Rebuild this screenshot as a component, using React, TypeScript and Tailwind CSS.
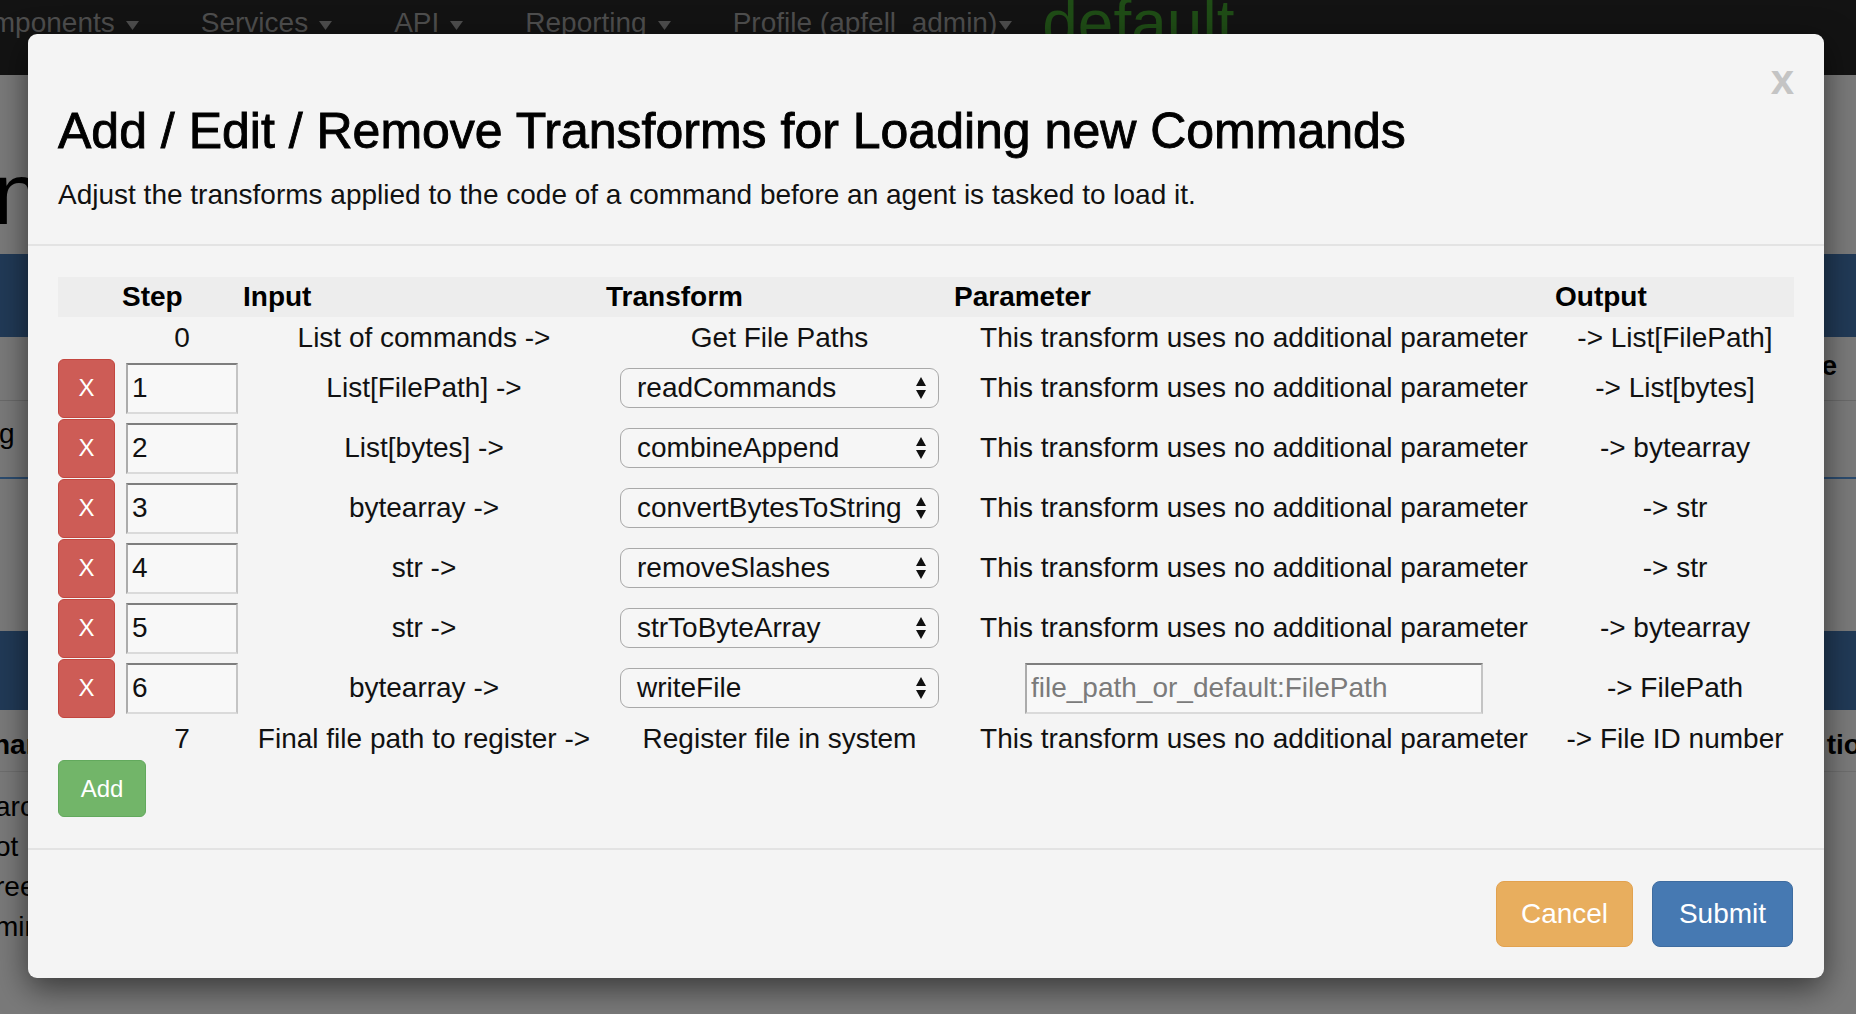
import React from "react";

type Row = {
  step: string;
  input: string;
  transform: string;
  output: string;
  param?: string;
};

const rows: Row[] = [
  { step: "1", input: "List[FilePath] ->", transform: "readCommands", output: "-> List[bytes]" },
  { step: "2", input: "List[bytes] ->", transform: "combineAppend", output: "-> bytearray" },
  { step: "3", input: "bytearray ->", transform: "convertBytesToString", output: "-> str" },
  { step: "4", input: "str ->", transform: "removeSlashes", output: "-> str" },
  { step: "5", input: "str ->", transform: "strToByteArray", output: "-> bytearray" },
  {
    step: "6",
    input: "bytearray ->",
    transform: "writeFile",
    output: "-> FilePath",
    param: "file_path_or_default:FilePath",
  },
];

const NO_PARAM = "This transform uses no additional parameter";

function Caret() {
  return (
    <svg width="13" height="9" viewBox="0 0 13 9" className="ml-[11px] mt-[4px] shrink-0">
      <path d="M0 0 L13 0 L6.5 9 Z" fill="#4e4e4e" />
    </svg>
  );
}

function NavItem({ label }: { label: string }) {
  return (
    <div className="flex items-center whitespace-nowrap">
      <span>{label}</span>
      <Caret />
    </div>
  );
}

function SelectBox({ value }: { value: string }) {
  return (
    <div className="relative flex h-[40px] w-[319px] items-center whitespace-nowrap rounded-[9px] border-[1.5px] border-[#a9a9a9] bg-[#f6f6f6] pl-[16px] text-[28px] leading-none text-[#111]">
      {value}
      <svg
        width="10"
        height="22"
        viewBox="0 0 10 22"
        className="absolute right-[12px] top-1/2 -translate-y-1/2"
      >
        <path d="M5 0 L10 9 L0 9 Z M0 13 L10 13 L5 22 Z" fill="#111" />
      </svg>
    </div>
  );
}

const inset =
  "border-2 border-t-[#7e7e7e] border-l-[#ababab] border-r-[#c4c4c4] border-b-[#dadada] bg-[#f8f8f8]";

const gridCols = "grid grid-cols-[61px_121px_363px_348px_601px_241px]";

export default function App() {
  return (
    <div className="relative h-[1014px] w-[1856px] overflow-hidden bg-[#7a7a7a] font-['Liberation_Sans',Arial,sans-serif] text-black">
      {/* Page behind the modal */}
      <div className="flex h-full flex-col">
        <nav className="relative flex h-[75px] shrink-0 items-start overflow-hidden bg-[#131313] pl-0 text-[28px] leading-[28px] text-[#4e4e4e]">
          <div className="ml-[-44px] mt-[9px] flex gap-[62px]">
            <NavItem label="Components" />
            <NavItem label="Services" />
            <NavItem label="API" />
            <NavItem label="Reporting" />
            <div className="flex items-center whitespace-nowrap">
              <span>Profile (apfell_admin)</span>
              <svg width="13" height="9" viewBox="0 0 13 9" className="ml-[2px] mt-[4px] shrink-0">
                <path d="M0 0 L13 0 L6.5 9 Z" fill="#4e4e4e" />
              </svg>
            </div>
          </div>
          <div className="ml-[30px] mt-[-9px] text-[64px] leading-[64px] text-[#1f4c16]">default</div>
        </nav>

        <div className="h-[179px] shrink-0 pt-[75px]">
          <div className="ml-[-7px] text-[88px] leading-[88px] text-black">nt</div>
        </div>

        <div className="h-[83px] shrink-0 bg-[#213a57]" />

        <div className="flex h-[142px] shrink-0 flex-col border-b-2 border-[#2c4c6f]">
          <div className="flex h-[64px] items-end justify-end border-b border-[#6a6a6a] pb-[20px] text-[28px] font-bold leading-[28px]">
            <span className="mr-[19px]">Name</span>
          </div>
          <div className="pt-[19px] text-[28px] leading-[28px]">
            <span className="ml-[-1px]">g</span>
          </div>
        </div>

        <div className="h-[152px] shrink-0" />

        <div className="h-[79px] shrink-0 bg-[#213a57]" />

        <div className="flex h-[62px] shrink-0 items-end justify-between border-b border-[#6e6e6e] pb-[12px] text-[28px] font-bold leading-[28px]">
          <span className="ml-[-7px]">nar</span>
          <span className="mr-[-22px]">tion</span>
        </div>

        <div className="flex flex-col pt-[15px] text-[28px] leading-[40px]">
          <span className="ml-[-5px]">aro</span>
          <span className="ml-[-5px]">ot</span>
          <span className="ml-[-5px]">ree</span>
          <span className="ml-[-5px]">min</span>
        </div>
      </div>

      {/* Modal */}
      <div className="absolute left-[28px] top-[34px] flex h-[944px] w-[1796px] flex-col rounded-[9px] bg-[#f4f4f4] text-[#111] shadow-[0_10px_32px_rgba(0,0,0,0.55)]">
        {/* Header */}
        <div className="relative border-b-2 border-[#e3e3e3] px-[30px] pb-[35px] pt-[72px]">
          <button
            type="button"
            className="absolute right-[30px] top-[25px] text-[42px] font-bold leading-[42px] text-[#c4c4c4]"
          >
            x
          </button>
          <h4 className="whitespace-nowrap text-[50px] font-medium leading-[50px] text-black [-webkit-text-stroke:0.9px_black]">
            Add / Edit / Remove Transforms for Loading new Commands
          </h4>
          <p className="mt-[25px] whitespace-nowrap text-[28px] leading-[28px] text-[#111]">
            Adjust the transforms applied to the code of a command before an agent is tasked to load it.
          </p>
        </div>

        {/* Body */}
        <div className="px-[30px] pb-[31px] pt-[31px]">
          <div className={`${gridCols} h-[40px] items-center bg-[#ededed] text-[28px] font-bold leading-[28px] text-black`}>
            <div />
            <div className="pl-[3px]">Step</div>
            <div className="pl-[3px]">Input</div>
            <div className="pl-[3px]">Transform</div>
            <div className="pl-[3px]">Parameter</div>
            <div className="pl-[3px]">Output</div>
          </div>

          <div className={`${gridCols} h-[41px] items-center text-[28px] leading-[28px]`}>
            <div />
            <div className="pl-[5px] text-center">0</div>
            <div className="whitespace-nowrap pl-[5px] text-center">List of commands -&gt;</div>
            <div className="whitespace-nowrap pl-[5px] text-center">Get File Paths</div>
            <div className="whitespace-nowrap pl-[5px] text-center">{NO_PARAM}</div>
            <div className="whitespace-nowrap pl-[5px] text-center">-&gt; List[FilePath]</div>
          </div>

          {rows.map((r) => (
            <div key={r.step} className={`${gridCols} h-[60px] items-center text-[28px] leading-[28px]`}>
              <div>
                <button
                  type="button"
                  className="flex h-[59px] w-[57px] items-center justify-center rounded-[6px] border border-[#c3463f] bg-[#cd5c56] text-[24px] leading-none text-white"
                >
                  X
                </button>
              </div>
              <div className="flex justify-center pl-[5px]">
                <input
                  defaultValue={r.step}
                  className={`h-[51px] w-[112px] pl-[4px] text-[28px] text-[#111] outline-none ${inset}`}
                />
              </div>
              <div className="whitespace-nowrap pl-[5px] text-center">{r.input}</div>
              <div className="flex justify-center pl-[5px]">
                <SelectBox value={r.transform} />
              </div>
              <div className="flex justify-center whitespace-nowrap pl-[5px]">
                {r.param ? (
                  <input
                    placeholder={r.param}
                    className={`h-[51px] w-[458px] pl-[4px] text-[28px] text-[#111] outline-none placeholder:text-[#7b7b7b] ${inset}`}
                  />
                ) : (
                  <span>{NO_PARAM}</span>
                )}
              </div>
              <div className="whitespace-nowrap pl-[5px] text-center">{r.output}</div>
            </div>
          ))}

          <div className={`${gridCols} h-[42px] items-center text-[28px] leading-[28px]`}>
            <div />
            <div className="pl-[5px] text-center">7</div>
            <div className="whitespace-nowrap pl-[5px] text-center">Final file path to register -&gt;</div>
            <div className="whitespace-nowrap pl-[5px] text-center">Register file in system</div>
            <div className="whitespace-nowrap pl-[5px] text-center">{NO_PARAM}</div>
            <div className="whitespace-nowrap pl-[5px] text-center">-&gt; File ID number</div>
          </div>

          <button
            type="button"
            className="flex h-[57px] w-[88px] items-center justify-center rounded-[6px] border border-[#62a95d] bg-[#72b569] text-[24px] leading-none text-white"
          >
            Add
          </button>
        </div>

        {/* Footer */}
        <div className="flex justify-end gap-[19px] border-t-2 border-[#e3e3e3] px-[31px] pb-[31px] pt-[31px]">
          <button
            type="button"
            className="flex h-[66px] w-[137px] items-center justify-center rounded-[8px] border border-[#e2a24f] bg-[#e8ae5e] text-[28px] leading-none text-white"
          >
            Cancel
          </button>
          <button
            type="button"
            className="flex h-[66px] w-[141px] items-center justify-center rounded-[8px] border border-[#3e6ca0] bg-[#4679b2] text-[28px] leading-none text-white"
          >
            Submit
          </button>
        </div>
      </div>
    </div>
  );
}
